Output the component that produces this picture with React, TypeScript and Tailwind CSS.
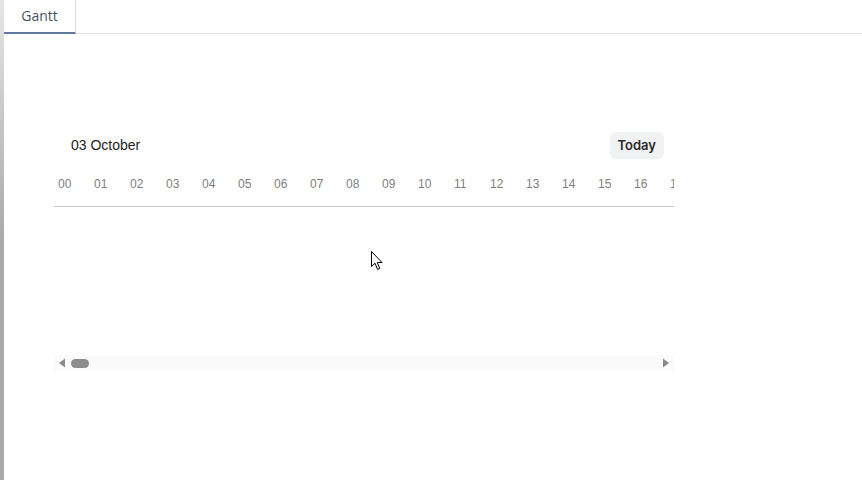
import React from "react";

// only the hours that show before the clip edge
const hours = Array.from({ length: 18 }, (_, i) => String(i).padStart(2, "0"));

function Cursor() {
  return (
    <svg className="absolute left-[371px] top-[251px]" width="13" height="20" viewBox="0 0 13 20">
      <path
        d="M0.5 0.5 L0.5 15.5 L4 12.2 L6.6 18.4 L8.8 17.5 L6.3 11.5 L11 11.5 Z"
        fill="#fff"
        stroke="#000"
        strokeWidth="1"
        strokeLinejoin="round"
      />
    </svg>
  );
}

export default function App() {
  return (
    <div className="relative flex h-[480px] w-[862px] overflow-hidden bg-white">
      {/* left edge strip */}
      <div className="w-1 bg-gradient-to-b from-[#e6e6e6] via-[#a9a9a9] to-[#a9a9a9]" />

      <div className="flex flex-1 flex-col">
        {/* tab bar */}
        <div className="flex h-[34px] border-b border-[#e2e2e2]">
          <div className="-mb-px flex w-[72px] items-center justify-center border-r border-[#dcdcdc] border-b-2 border-b-[#60779f] pb-[2px] text-[14px] text-[#4a5260] [font-family:'Open_Sans',sans-serif]">
            Gantt
          </div>
        </div>

        {/* gantt */}
        <div className="ml-[50px] mt-[98px] w-[620px] [font-family:'Liberation_Sans',Arial,sans-serif]">
          <div className="flex h-[27px] items-center justify-between pl-[17px] pr-[10px]">
            <span className="text-[14px] text-[#222]">03 October</span>
            <button className="h-[27px] rounded-[6px] bg-[#f1f2f3] px-2 text-[13px] font-semibold text-[#2a2a2a] [font-family:Inter,sans-serif]">
              Today
            </button>
          </div>

          <div className="mt-[12px] flex h-[36px] overflow-hidden border-b border-[#c8c8c8]">
            {hours.map((h) => (
              <div key={h} className="w-[36px] shrink-0 pl-[4px] pt-[4px] text-[12px] text-[#808080]">
                {h}
              </div>
            ))}
          </div>

          <div className="mt-[149px] flex h-[14px] items-center bg-[#fafafa] px-[4px]">
            <svg width="8" height="10" viewBox="0 0 8 10">
              <path d="M7 0.5 L7 9.5 L1 5 Z" fill="#8a8a8a" />
            </svg>
            <div className="ml-[5px] h-[9px] w-[18px] rounded-full bg-[#8d8d8d]" />
            <div className="flex-1" />
            <svg width="8" height="10" viewBox="0 0 8 10">
              <path d="M1 0.5 L1 9.5 L7 5 Z" fill="#8a8a8a" />
            </svg>
          </div>
        </div>
      </div>

      <Cursor />
    </div>
  );
}
